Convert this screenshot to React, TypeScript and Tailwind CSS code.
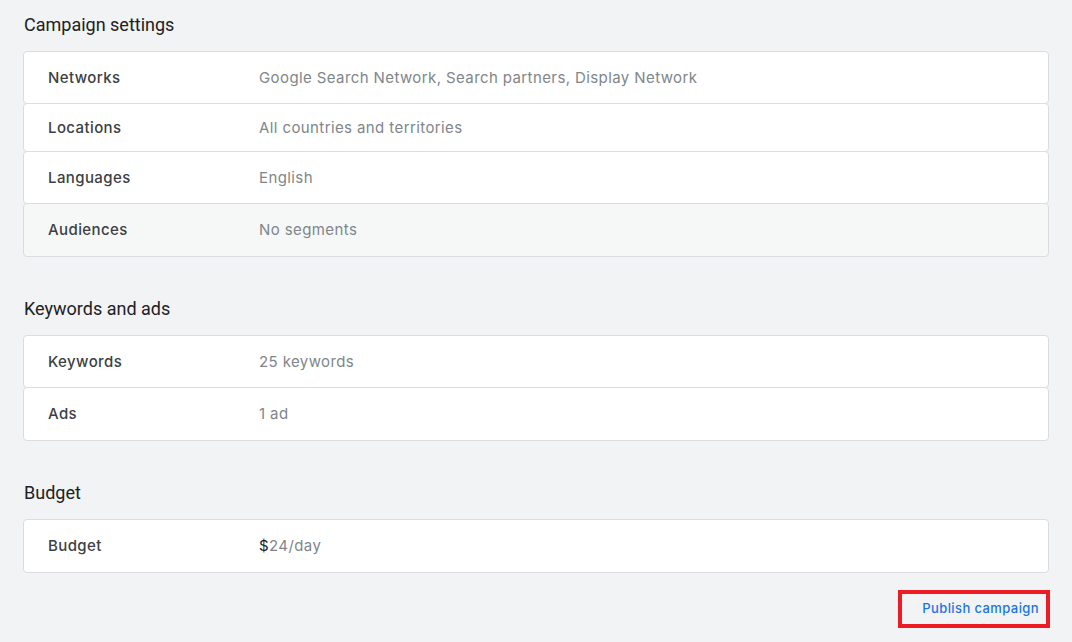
import React from "react";

type Row = { label: string; value: React.ReactNode; h: string; muted?: boolean };

const roboto = { fontFamily: 'Roboto, "Noto Sans", Arial, sans-serif' };
const inter = { fontFamily: 'Inter, Roboto, "Noto Sans", Arial, sans-serif' };

function Section({ title, rows, first }: { title: string; rows: Row[]; first?: boolean }) {
  return (
    <section className={first ? "pt-[13px]" : "pt-[40px]"}>
      <h2 className="h-6 leading-6 text-[18px] text-[#202124] pl-px" style={roboto}>
        {title}
      </h2>
      <div className="mt-[14px] flex flex-col tracking-[0.4px]" style={inter}>
        {rows.map((r, i) => (
          <div
            key={r.label}
            className={`${r.h} ${i > 0 ? "-mt-px" : ""} ${
              r.muted ? "bg-[#f6f7f7]" : "bg-white"
            } flex items-center border border-[#dadce0] rounded-[4px] pl-6 pt-px`}
          >
            <div className="w-[211px] shrink-0 text-[15px] font-medium text-[#3c4043]">{r.label}</div>
            <div className="text-[15px] text-[#80868b]">{r.value}</div>
          </div>
        ))}
      </div>
    </section>
  );
}

export default function App() {
  return (
    <div className="min-h-[642px] w-full bg-[#f1f3f4] px-[23px]" style={roboto}>
      <Section
        first
        title="Campaign settings"
        rows={[
          { label: "Networks", value: "Google Search Network, Search partners, Display Network", h: "h-[53px]" },
          { label: "Locations", value: "All countries and territories", h: "h-[49px]" },
          { label: "Languages", value: "English", h: "h-[53px]" },
          { label: "Audiences", value: "No segments", h: "h-[54px]", muted: true },
        ]}
      />
      <Section
        title="Keywords and ads"
        rows={[
          { label: "Keywords", value: "25 keywords", h: "h-[53px]" },
          { label: "Ads", value: "1 ad", h: "h-[54px]" },
        ]}
      />
      <Section
        title="Budget"
        rows={[
          {
            label: "Budget",
            value: (
              <span>
                <span className="text-[#202124]">$</span>24/day
              </span>
            ),
            h: "h-[54px]",
          },
        ]}
      />
      <div className="flex justify-end pt-[17px] -mr-px">
        <button
          className="h-[38px] w-[152px] border-4 border-[#ed1c24] flex items-center justify-end pr-[7px] text-[13px] font-medium text-[#1a73e8] tracking-[0.4px]"
          style={inter}
        >
          Publish campaign
        </button>
      </div>
    </div>
  );
}
